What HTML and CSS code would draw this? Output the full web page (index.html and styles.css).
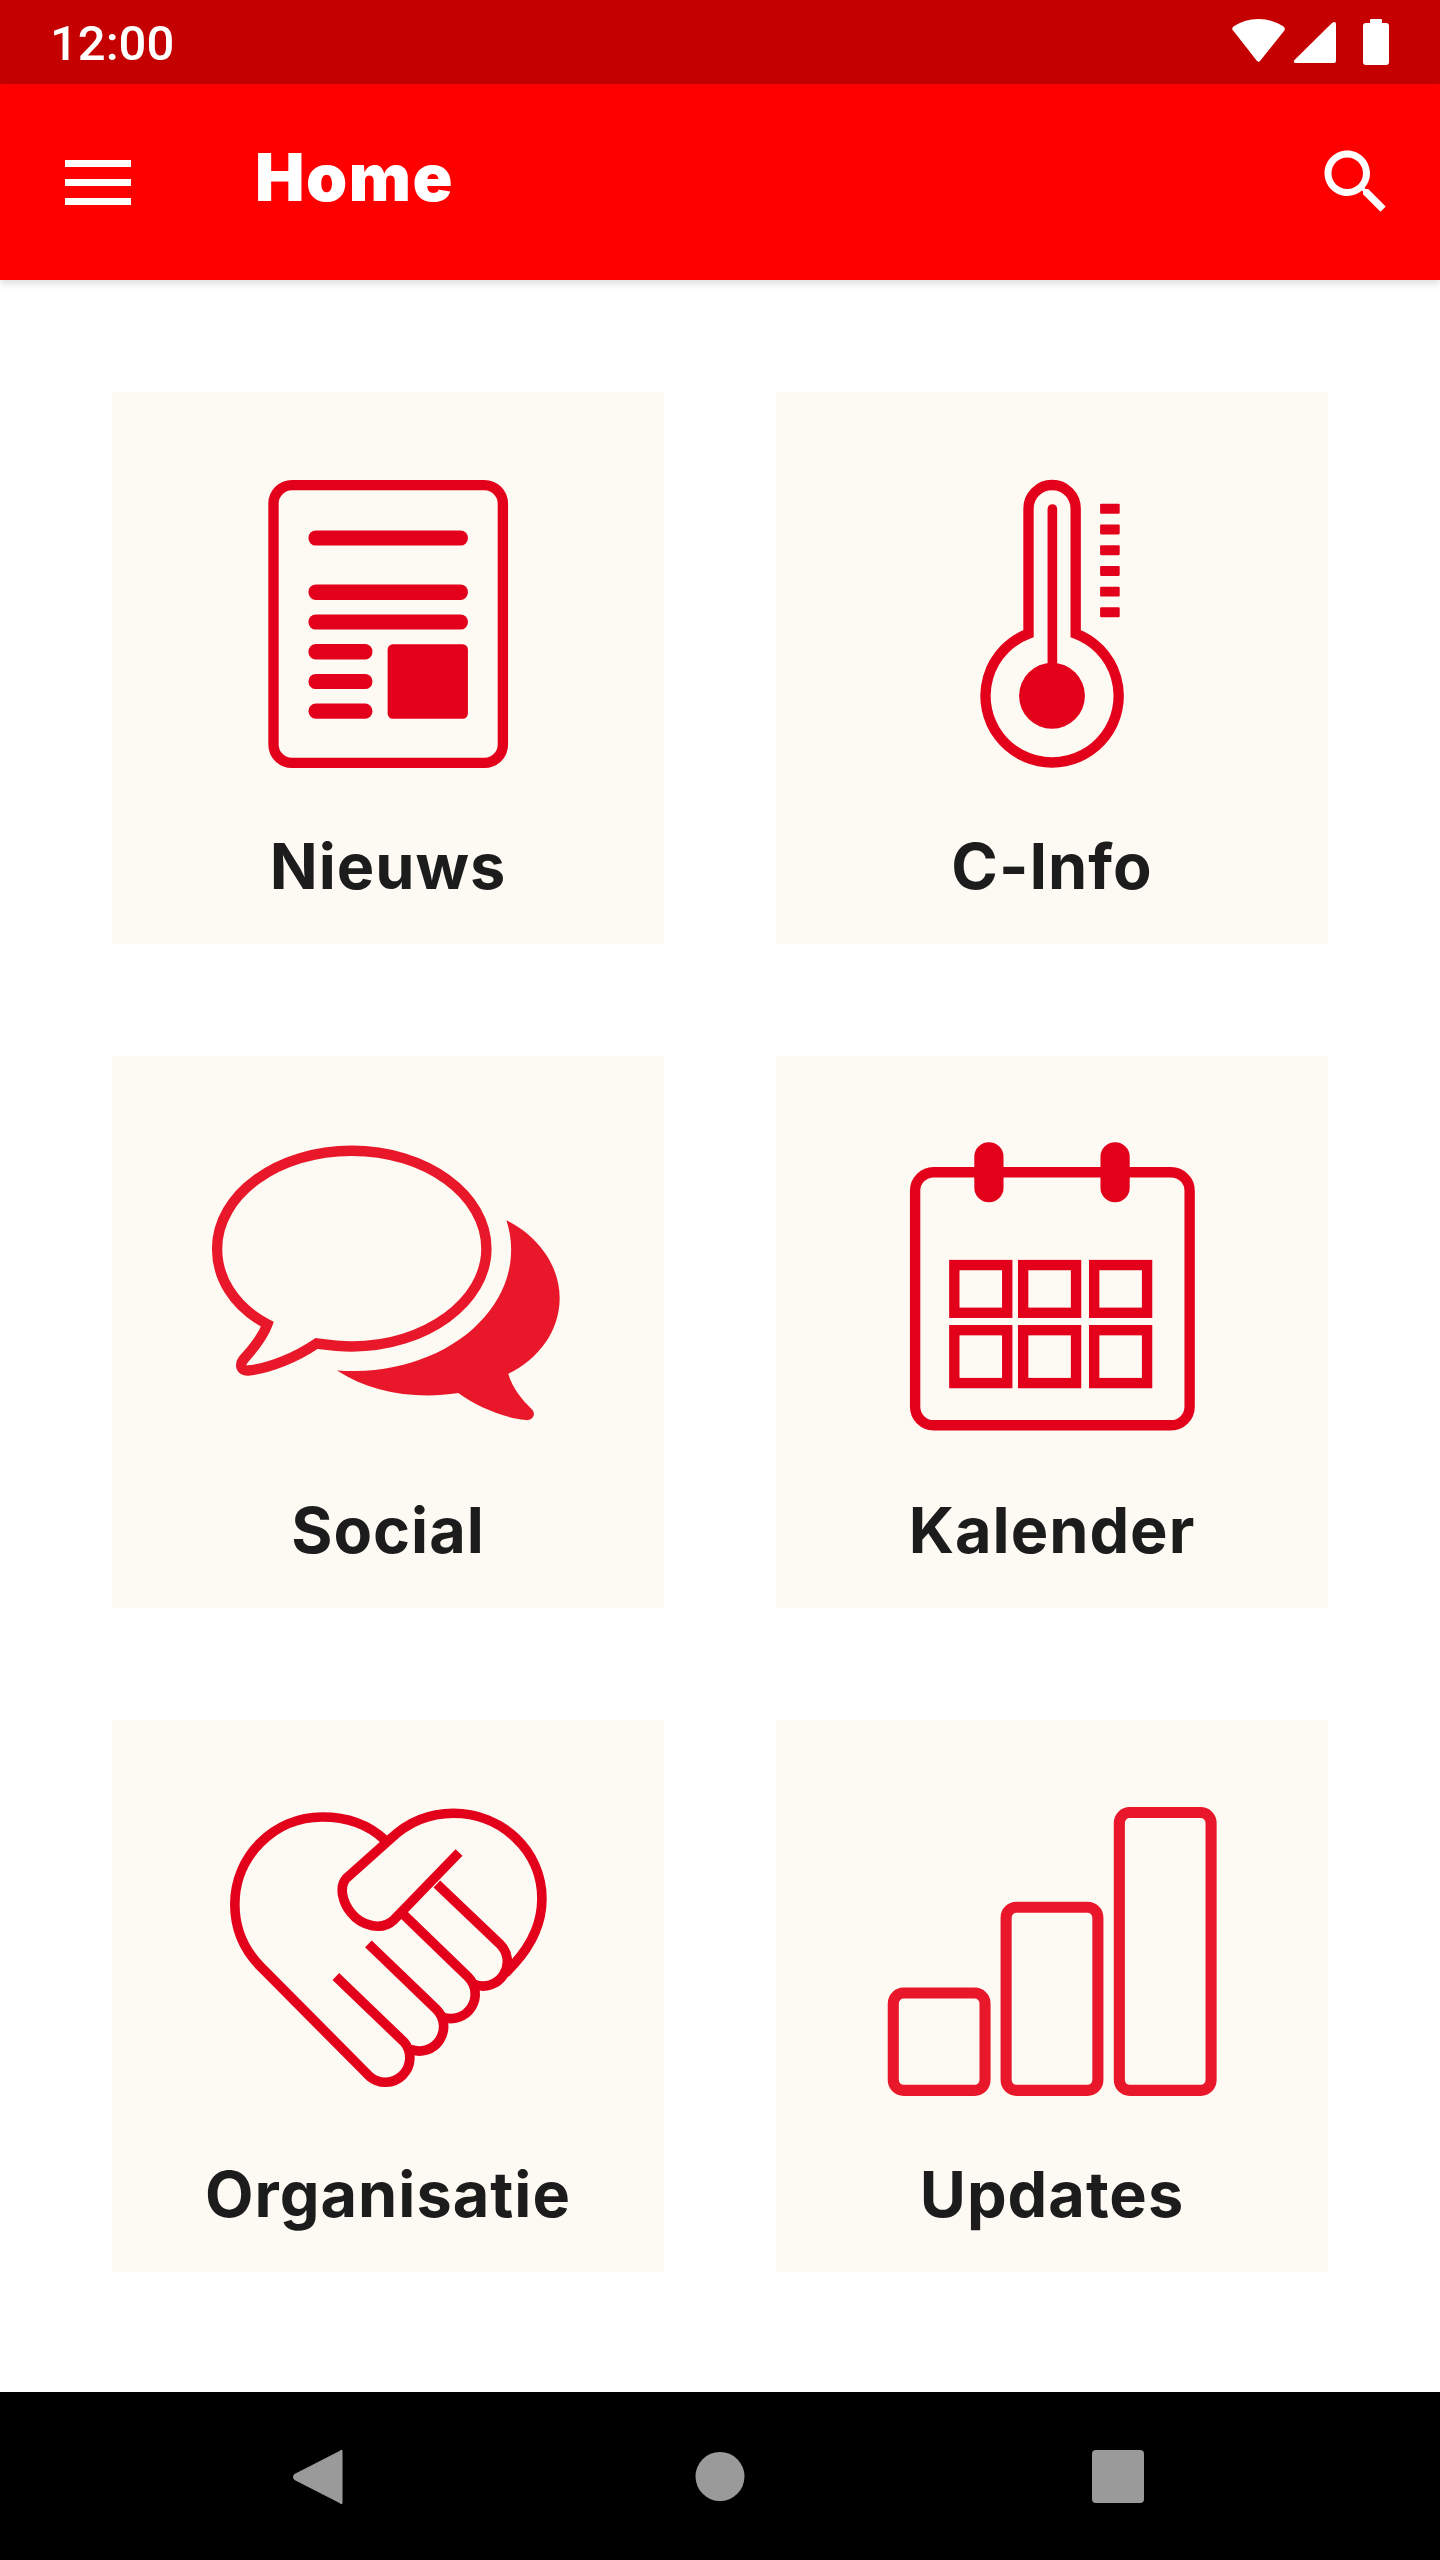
FILE: index.html
```html
<!DOCTYPE html>
<html>
<head>
  <link rel="stylesheet" href="styles.css">
</head>
<body>

  <div class="statusbar">
    <span class="time">12:00</span>
    <svg class="statusicons" viewBox="1220 0 180 84" width="180" height="84">
      <path d="M1233.500 31 Q1231 28.500 1233.500 26.500 C1240 22 1249 19 1258.500 19 C1268 19 1277 22 1283.500 26.500 Q1286 28.500 1284 31 L1260 61 Q1258.500 62.500 1257 61 Z"/>
      <path d="M1295 59.500 L1332 23 Q1336 20 1336 25 V61 Q1336 63 1334 63 H1296 Q1292 63 1295 59.500 Z"/>
      <path d="M1370 23 V20 Q1370 19 1371 19 H1381 Q1382 19 1382 20 V23 H1386 Q1389 23 1389 26 V62 Q1389 65 1386 65 H1366 Q1363 65 1363 62 V26 Q1363 23 1366 23 Z"/>
    </svg>
  </div>

  <div class="toolbar">
    <div class="menu">
      <span></span>
      <span></span>
      <span></span>
    </div>
    <a class="title">Home</a>
    <svg class="search" viewBox="0 0 24 24" width="84" height="84">
      <path d="M15.500 14h-.79l-.28-.27C15.410 12.590 16 11.110 16 9.500 16 5.910 13.090 3 9.500 3S3 5.910 3 9.500 5.910 16 9.500 16c1.610 0 3.090-.59 4.230-1.570l.27.28v.79l5 4.990L20.490 19l-4.990-5zm-6 0C7.010 14 5 11.990 5 9.500S7.010 5 9.500 5 14 7.010 14 9.500 11.990 14 9.500 14z"/>
    </svg>
  </div>

  <div class="content">
    <div class="grid">

      <a class="tile">
        <svg class="icon" viewBox="32 32 1492 1081" width="552" height="400">
          <rect class="line" x="468.500" y="283.500" width="620" height="751" rx="50"/>
          <rect class="solid" x="563" y="406" width="431" height="41" rx="20"/>
          <rect class="solid" x="563" y="552" width="431" height="42" rx="20"/>
          <rect class="solid" x="563" y="633" width="431" height="41" rx="20"/>
          <rect class="solid" x="563" y="713" width="173" height="42" rx="20"/>
          <rect class="solid" x="563" y="794" width="173" height="41" rx="20"/>
          <rect class="solid" x="563" y="874" width="173" height="41" rx="20"/>
          <rect class="solid" x="777" y="714" width="217" height="201" rx="14"/>
        </svg>
        <strong class="label">Nieuws</strong>
      </a>

      <a class="tile">
        <svg class="icon" viewBox="16 32 1492 1081" width="552" height="400">
          <path class="line" d="M698.500 347 V685 A180 180 0 1 0 826 685 V347 A63.750 63.750 0 0 0 698.500 347 Z"/>
          <path class="solid" d="M750 348 A13 13 0 0 1 776 348 V780 H750 Z"/>
          <circle class="solid" cx="762" cy="853" r="89"/>
          <rect class="solid" x="892" y="334" width="53" height="27" rx="3"/>
          <rect class="solid" x="892" y="390" width="53" height="27" rx="3"/>
          <rect class="solid" x="892" y="446" width="53" height="27" rx="3"/>
          <rect class="solid" x="892" y="502" width="53" height="27" rx="3"/>
          <rect class="solid" x="892" y="558" width="53" height="27" rx="3"/>
          <rect class="solid" x="892" y="614" width="53" height="27" rx="3"/>
        </svg>
        <strong class="label">C-Info</strong>
      </a>

      <a class="tile">
        <svg class="icon bright" viewBox="32 16 1492 1081" width="552" height="400">
          <path class="line" d="M452 741 C355 690 316 610 316 537 C316 390 480 272 680 272 C880 272 1044 390 1044 537 C1044 680 880 801 680 801 C650 801 615 797 585 793 C530 830 460 860 400 866 C380 868 375 850 390 833 C415 805 440 775 452 741 Z"/>
          <path class="solid" d="M1098 460 C1180 500 1242 580 1242 670 C1242 760 1185 835 1103 875 C1115 915 1140 945 1168 972 C1178 985 1170 1002 1150 1000 C1090 993 1020 965 968 927 C850 945 730 925 640 866 A428 328 0 0 0 1098 460 Z"/>
        </svg>
        <strong class="label">Social</strong>
      </a>

      <a class="tile">
        <svg class="icon" viewBox="16 16 1492 1081" width="552" height="400">
          <rect class="line" x="392" y="330" width="742" height="684" rx="50"/>
          <rect class="solid" x="552" y="249" width="79" height="162" rx="39"/>
          <rect class="solid" x="893" y="249" width="79" height="162" rx="39"/>
          <rect class="line" x="498" y="581" width="143" height="129"/>
          <rect class="line" x="684" y="581" width="143" height="129"/>
          <rect class="line" x="876" y="581" width="143" height="129"/>
          <rect class="line" x="498" y="757" width="143" height="143"/>
          <rect class="line" x="684" y="757" width="143" height="143"/>
          <rect class="line" x="876" y="757" width="143" height="143"/>
        </svg>
        <strong class="label">Kalender</strong>
      </a>

      <a class="tile">
        <svg class="icon thin" viewBox="32 27 1492 1081" width="552" height="400">
          <path class="line" d="M768 350 C720 305 660 289 600 289 C470 289 364 395 364 525 C364 590 390 650 435 695 L728 990 A66 66 0 0 0 822 898 L637 720"/>
          <path class="line" d="M725 632 L908 808 A66 66 0 0 1 838 917"/>
          <path class="line" d="M815 548 L994 721 A66 66 0 0 1 925 830"/>
          <path class="line" d="M910 470 L1081 633 A66 66 0 0 1 1012 742"/>
          <path class="line" d="M1095 712 L1120 685 C1165 635 1194 575 1194 510 C1194 380 1085 279 955 279 C890 279 830 305 785 348 L665 455 C645 478 655 520 678 548 C705 582 760 600 795 566 L970 385"/>
        </svg>
        <strong class="label">Organisatie</strong>
      </a>

      <a class="tile">
        <svg class="icon bright wide" viewBox="16 27 1492 1081" width="552" height="400">
          <rect class="line" x="333" y="765" width="248" height="263" rx="28"/>
          <rect class="line" x="638" y="533" width="248" height="495" rx="28"/>
          <rect class="line" x="944" y="277" width="248" height="751" rx="28"/>
        </svg>
        <strong class="label">Updates</strong>
      </a>

    </div>
  </div>

  <div class="navbar">
    <svg viewBox="276 2433 84 84" width="84" height="84">
      <path d="M342.500 2451 V2501 Q342.500 2505 339.500 2502 L294.500 2479 Q291.500 2476 294.500 2473 L339.500 2450 Q342.500 2447 342.500 2451 Z"/>
    </svg>
    <svg viewBox="678 2433 84 84" width="84" height="84">
      <circle cx="720" cy="2475.500" r="24.500"/>
    </svg>
    <svg viewBox="1080 2433 84 84" width="84" height="84">
      <rect x="1092" y="2449" width="52" height="53" rx="4"/>
    </svg>
  </div>

</body>
</html>
```

FILE: styles.css
```css
body {
  margin: 0;
  height: 100vh;
  display: flex;
  flex-direction: column;
  background-color: white;
  font-family: "Inter", "Liberation Sans", sans-serif;
}
.statusbar {
  height: 84px;
  background-color: #c40000;
  display: flex;
  align-items: center;
  justify-content: space-between;
  padding: 0 40px 0 50px;
}
.time {
  color: white;
  font-family: "Roboto", sans-serif;
  font-size: 49px;
  font-weight: 500;
  margin-top: 2px;
}
.statusicons {
  fill: white;
}
.toolbar {
  height: 196px;
  background-color: #ff0000;
  display: flex;
  align-items: center;
  padding: 0 42px 0 65px;
  box-shadow: 0 3px 8px rgba(0, 0, 0, 0.15);
  z-index: 1;
}
.menu {
  width: 66px;
  display: flex;
  flex-direction: column;
  gap: 12px;
}
.menu span {
  height: 7px;
  background-color: white;
}
.title {
  color: white;
  font-size: 66px;
  font-weight: 900;
  letter-spacing: 1.5px;
  margin-left: 124px;
  margin-bottom: 10px;
  flex: 1;
}
.search {
  fill: white;
}
.content {
  flex: 1;
  padding: 112px;
}
.grid {
  display: grid;
  grid-template-columns: 552px 552px;
  gap: 112px;
}
.tile {
  height: 552px;
  background-color: #fcfaf3;
  display: flex;
  flex-direction: column;
}
.icon {
  display: block;
}
.line {
  fill: none;
  stroke: #e3001b;
  stroke-width: 28;
}
.solid {
  fill: #e3001b;
}
.bright .line {
  stroke: #e8182a;
}
.bright .solid {
  fill: #e8182a;
}
.thin .line {
  stroke-width: 26;
}
.wide .line {
  stroke-width: 30;
}
.label {
  height: 148px;
  line-height: 148px;
  text-align: center;
  color: #1c1c1c;
  font-size: 63px;
  font-weight: 700;
  letter-spacing: 1px;
}
.navbar {
  height: 168px;
  background-color: black;
  display: flex;
  align-items: center;
  justify-content: center;
  gap: 318px;
  fill: #9a9a9a;
}
```
